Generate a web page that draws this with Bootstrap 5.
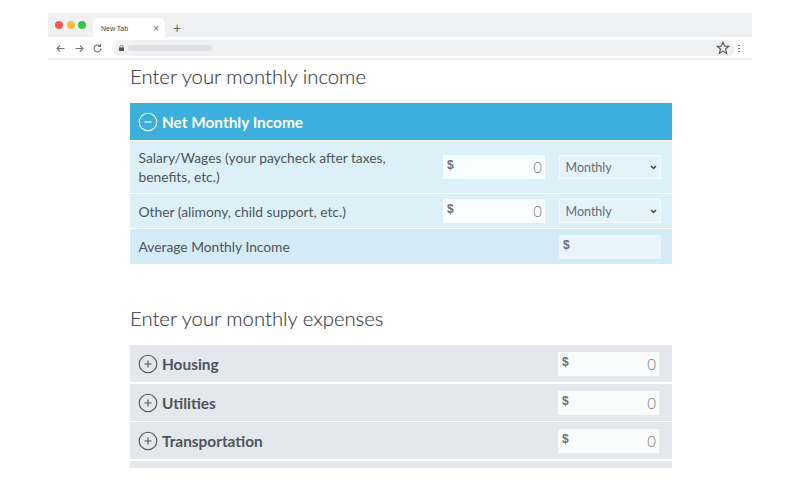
<!DOCTYPE html>
<html lang="en">
<head>
<meta charset="utf-8">
<title>Monthly budget</title>
<link href="https://cdn.jsdelivr.net/npm/bootstrap@5.3.0/dist/css/bootstrap.min.css" rel="stylesheet">
<style>
html,body{height:480px;overflow:hidden;background:#fff}
body{font-family:Lato,"Liberation Sans",sans-serif;color:#4c5560;padding:13px 48px 0}
.shell{width:704px;height:455px;overflow:hidden}
.tabstrip{height:24px;background:#eff0f2;padding-left:7px}
.dots{gap:3.5px;margin-top:0}
.dot{width:8px;height:8px;border-radius:50%}
.dot-r{background:#fc5753}.dot-y{background:#fdbc40}.dot-g{background:#33c748}
.tabitem{width:72px;height:19px;margin-left:7px;padding:1px 6px 0 8px;background:#fff;border-radius:5px 5px 0 0;font:7px "Liberation Sans",sans-serif;color:#444}
.tabitem span:last-child{font-size:10px;color:#666;line-height:9px}
.newtab{margin-left:8px;font:14px/14px "Liberation Sans",sans-serif;color:#666;padding-top:6px}
.toolbar{height:21px;background:#fff;padding:3px 0 2px 7px}
.navicon{display:block;width:11px;height:11px;margin-right:7.500px;fill:none;stroke:#777;stroke-width:1.1}
.omnibox{width:623px;height:16px;margin-left:1.500px;border-radius:8px;background:#f0f1f3;padding:0 5px 0 6.500px}
.lockicon{width:5px;height:6px;fill:#555;margin-right:4px}
.urlbar{width:85px;height:6px;border-radius:3px;background:#dfe1e4}
.staricon{width:14px;height:14px;margin-left:auto;fill:none;stroke:#555;stroke-width:1.1}
.kebab{width:2px;height:8px;margin-left:3px;background:radial-gradient(circle,#777 .9px,transparent 1px) 0 0/2px 3px}
.sepline{height:2px;background:#f1f2f3}
.sheet{width:542px;margin-left:82px}
.sheet-title{font-size:20.300px;font-weight:300;line-height:26px;margin:3px 0 14px;color:#384049;-webkit-text-stroke:.15px #384049}
.title-two{margin:41px 0 14px}
.hdrbar{height:37px;background:#3cafdc;color:#fff;margin-bottom:1px;padding:0 11px 0 8px}
.hdrbar .lbl,.exprow .lbl{font-size:15.400px;font-weight:700;padding-top:2px}
.togglesvg{width:20px;height:20px;margin-right:4px;fill:none;stroke:currentColor;stroke-width:1.1;flex:none}
.incrow{background:#dcf0f8;padding:0 11px 0 8.500px;margin-bottom:1px;font-size:13.800px;line-height:19px}
.row-a{height:52px}.row-b{height:34px}
.row-c{height:35px;margin:0;background:#d2ebf5}
.rowtext{width:290px}
.moneybox{position:relative;width:102px;height:24px;background:#f8fdff;text-align:right;padding:0 3px 0 0;font-size:15px;line-height:24px;color:#757c82;font-weight:300}
.moneybox::before{content:"$";position:absolute;left:4px;top:-2px;font:bold 12px/24px "Liberation Sans",sans-serif;color:#6c7074}
.tint{background:#e9f5fb}
.selbox{width:102px;height:24px;margin-left:14px;border:1px solid #f3fafd;background:#e4f3f9;padding:1px 3px 0 5.500px;font-size:12.500px;color:#636c75;line-height:22px}
.selbox svg{width:7px;height:5px;fill:none;stroke:#444;stroke-width:1.5}
.exprow{background:#e4e7eb;padding:0 13px 0 8px;margin-bottom:2px;height:37px}
.exprow.tall{margin-bottom:1px}
.exprow .moneybox{background:#fafcfc;width:101px;height:24px}
</style>
</head>
<body>
<div class="shell">
  <div class="tabstrip d-flex align-items-end">
    <div class="dots d-flex align-self-center"><i class="dot dot-r"></i><i class="dot dot-y"></i><i class="dot dot-g"></i></div>
    <div class="tabitem d-flex justify-content-between align-items-center"><span>New Tab</span><span>×</span></div>
    <div class="newtab align-self-center">+</div>
  </div>
  <div class="toolbar d-flex align-items-center">
    <svg class="navicon" viewBox="0 0 11 11"><path d="M9.5 5.5H2M5 2.5l-3 3 3 3"/></svg>
    <svg class="navicon" viewBox="0 0 11 11"><path d="M1.5 5.5H9M6 2.5l3 3-3 3"/></svg>
    <svg class="navicon" viewBox="0 0 11 11"><path d="M9 5.5a3.5 3.5 0 1 1-1-2.5M8.5 1v2.4H6"/></svg>
    <div class="omnibox d-flex align-items-center">
      <svg class="lockicon" viewBox="0 0 5 6"><rect y="2.4" width="5" height="3.6"/><path d="M1 2.4V1.6a1.5 1.5 0 0 1 3 0v.8" fill="none" stroke="#555" stroke-width=".7"/></svg>
      <div class="urlbar"></div>
      <svg class="staricon" viewBox="0 0 14 14"><path d="M7 1.2l1.7 4h4.2L9.5 8l1.2 4.6L7 10.100l-3.700 2.500L4.500 8 1.100 5.200h4.200z"/></svg>
    </div>
    <i class="kebab"></i>
  </div>
  <div class="sepline"></div>
  <main class="sheet">
    <h1 class="sheet-title">Enter your monthly income</h1>
    <div class="hdrbar d-flex align-items-center">
      <svg class="togglesvg" viewBox="0 0 20 20"><circle cx="10" cy="10" r="8.800"/><path d="M6.500 10h7"/></svg>
      <span class="lbl">Net Monthly Income</span>
    </div>
    <div class="incrow row-a d-flex align-items-center">
      <div class="rowtext flex-shrink-0">Salary/Wages (your paycheck after taxes, benefits, etc.)</div>
      <div class="moneybox ms-auto">0</div>
      <div class="selbox d-flex justify-content-between align-items-center"><span>Monthly</span><svg viewBox="0 0 7 5"><path d="M1 1l2.500 2.500L6 1"/></svg></div>
    </div>
    <div class="incrow row-b d-flex align-items-center">
      <div class="rowtext flex-shrink-0">Other (alimony, child support, etc.)</div>
      <div class="moneybox ms-auto">0</div>
      <div class="selbox d-flex justify-content-between align-items-center"><span>Monthly</span><svg viewBox="0 0 7 5"><path d="M1 1l2.500 2.500L6 1"/></svg></div>
    </div>
    <div class="incrow row-c d-flex align-items-center justify-content-between">
      <div>Average Monthly Income</div>
      <div class="moneybox tint"></div>
    </div>
    <h2 class="sheet-title title-two">Enter your monthly expenses</h2>
    <div class="exprow d-flex align-items-center">
      <svg class="togglesvg" viewBox="0 0 20 20"><circle cx="10" cy="10" r="8.800"/><path d="M6.500 10h7M10 6.500v7"/></svg>
      <span class="lbl">Housing</span><div class="moneybox ms-auto">0</div>
    </div>
    <div class="exprow tall d-flex align-items-center">
      <svg class="togglesvg" viewBox="0 0 20 20"><circle cx="10" cy="10" r="8.800"/><path d="M6.500 10h7M10 6.500v7"/></svg>
      <span class="lbl">Utilities</span><div class="moneybox ms-auto">0</div>
    </div>
    <div class="exprow d-flex align-items-center">
      <svg class="togglesvg" viewBox="0 0 20 20"><circle cx="10" cy="10" r="8.800"/><path d="M6.500 10h7M10 6.500v7"/></svg>
      <span class="lbl">Transportation</span><div class="moneybox ms-auto">0</div>
    </div>
    <div class="exprow"></div>
  </main>
</div>
</body>
</html>
